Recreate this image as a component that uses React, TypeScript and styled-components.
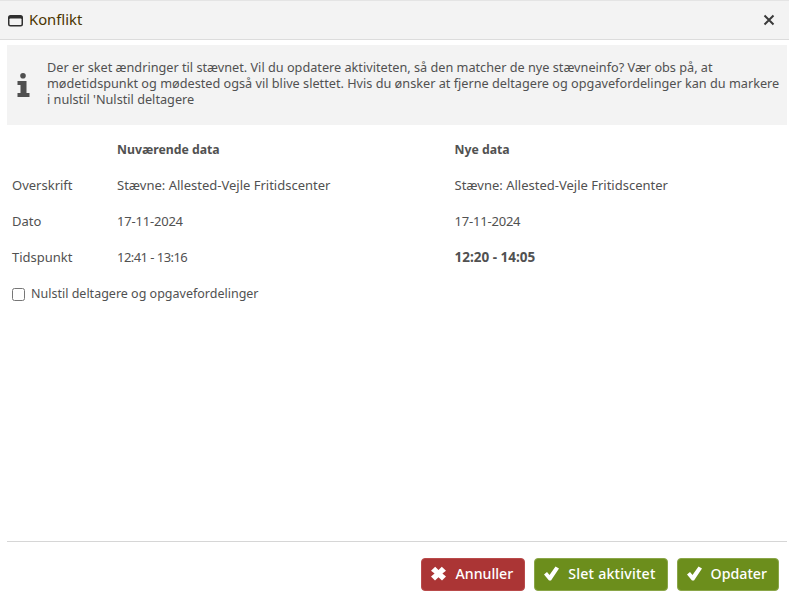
import React from "react";
import styled, { createGlobalStyle } from "styled-components";

const Global = createGlobalStyle`
  html, body { margin: 0; padding: 0; background: #fff; overflow: hidden; }
  * { box-sizing: border-box; }
`;
const Dialog = styled.div`
  width: 789px; height: 592px; display: flex; flex-direction: column;
  font-family: "Noto Sans", "Open Sans", sans-serif; font-size: 13px; color: #515151; overflow: hidden;
`;
const TitleBar = styled.header`
  height: 40px; flex: none; display: flex; align-items: center; padding: 0 14px 0 8px; gap: 6px;
  background: #f3f3f3; border-top: 1px solid #e4e4e4; border-bottom: 1px solid #dcdcdc;
`;
const Title = styled.span`
  flex: 1; font-size: 14.8px; color: #4a3500; margin-top: -3px;
`;
const Body = styled.main`
  flex: 1; display: flex; flex-direction: column; padding: 5px 2px 0 7px;
`;
const InfoBox = styled.section`
  height: 80px; display: flex; align-items: center; gap: 17px; padding: 0 4px 4px 10px; background: #f3f3f3;
  line-height: 16px; font-size: 12.7px;
`;
const InfoGlyph = styled.svg`
  flex: none; margin-top: 4px;
`;
const Grid = styled.div`
  display: grid; grid-template-columns: 105px 337.5px 1fr; grid-auto-rows: 36px; align-items: center;
  padding: 6px 0 0 5px;
`;
const Head = styled.div`
  font-weight: 700; font-size: 12.25px;
`;
const Cell = styled.div<{ $bold?: boolean; $track?: number }>`
  font-weight: ${(p) => (p.$bold ? 700 : 400)};
  font-size: ${(p) => (p.$bold ? "13.5px" : "13px")};
  letter-spacing: ${(p) => p.$track ?? 0}px;
`;
const CheckRow = styled.label`
  display: flex; align-items: center; gap: 6px; padding-left: 5px; height: 20px; margin-top: 8px;
  font-size: 12.5px;
`;
const Check = styled.input`
  width: 13px; height: 13px; margin: 3px 0 0 0;
`;
const Footer = styled.footer`
  flex: none; height: 51px; margin: 0 2px 0 7px; border-top: 1px solid #d6d6d6;
  display: flex; justify-content: flex-end; align-items: flex-start; gap: 9px; padding: 16px 8px 0 0;
`;
const Button = styled.button<{ $danger?: boolean; $spread?: boolean }>`
  height: 33px; display: flex; align-items: center; gap: 9px; padding: 0 11px 2px 9px; border-radius: 4px;
  font-family: inherit; font-size: 14.2px; font-weight: 500; color: #fff;
  letter-spacing: ${(p) => (p.$spread ? "0.2px" : "0")};
  background: ${(p) => (p.$danger ? "#ab3535" : "#6c8e1c")};
  border: 1px solid ${(p) => (p.$danger ? "#b94a4a" : "#8aa648")};
`;

const CheckIcon = () => (
  <svg width="15" height="15" viewBox="0 0 15 15" aria-hidden>
    <path d="M0 8.5 L3 6 L5.5 9 L11.5 0.5 L15 2.5 L7 14.5 L5 14.5 Z" fill="#fff" />
  </svg>
);
const CrossIcon = () => (
  <svg width="15" height="15" viewBox="0 0 15 15" aria-hidden>
    <path d="M7.5 4 L10.8 0.8 L15 4.8 L11.4 7.5 L15 10.4 L11 14.4 L7.5 11.2 L4 14.4 L0 10.4 L3.6 7.5 L0 4.8 L4.2 0.8 Z" fill="#fff" />
  </svg>
);
const WindowIcon = () => (
  <svg width="15" height="13" viewBox="0 0 15 13" aria-hidden>
    <rect x="0" y="1" width="15" height="11.5" rx="2.5" fill="#2f2f2f" />
    <rect x="1.5" y="4.5" width="12" height="6.5" rx="0.8" fill="#f3f3f3" />
  </svg>
);
const CloseIcon = () => (
  <svg width="12" height="12" viewBox="0 0 12 12" aria-hidden>
    <path d="M1.5 1.5 L10.5 10.5 M10.5 1.5 L1.5 10.5" stroke="#3a3a3a" strokeWidth="2" />
  </svg>
);
const InfoIcon = () => (
  <InfoGlyph width="13" height="24" viewBox="0 0 13 24" aria-hidden>
    <circle cx="6" cy="2.8" r="2.8" fill="#4f4f4f" />
    <path d="M0.5 8 H9.5 V20 H12.5 V24 H0.5 V20 H3.5 V12 H0.5 Z" fill="#4f4f4f" />
  </InfoGlyph>
);

export default function App() {
  return (
    <Dialog>
      <Global />
      <TitleBar>
        <WindowIcon />
        <Title>Konflikt</Title>
        <CloseIcon />
      </TitleBar>
      <Body>
        <InfoBox>
          <InfoIcon />
          <div>
            Der er sket ændringer til stævnet. Vil du opdatere aktiviteten, så den matcher de nye stævneinfo? Vær obs på, at
            mødetidspunkt og mødested også vil blive slettet. Hvis du ønsker at fjerne deltagere og opgavefordelinger kan du markere
            i nulstil 'Nulstil deltagere
          </div>
        </InfoBox>
        <Grid>
          <Cell />
          <Head>Nuværende data</Head>
          <Head>Nye data</Head>
          <Cell>Overskrift</Cell>
          <Cell>Stævne: Allested-Vejle Fritidscenter</Cell>
          <Cell>Stævne: Allested-Vejle Fritidscenter</Cell>
          <Cell>Dato</Cell>
          <Cell $track={-0.2}>17-11-2024</Cell>
          <Cell $track={-0.2}>17-11-2024</Cell>
          <Cell>Tidspunkt</Cell>
          <Cell $track={-0.55}>12:41 - 13:16</Cell>
          <Cell $bold>12:20 - 14:05</Cell>
        </Grid>
        <CheckRow>
          <Check type="checkbox" />
          Nulstil deltagere og opgavefordelinger
        </CheckRow>
      </Body>
      <Footer>
        <Button $danger><CrossIcon />Annuller</Button>
        <Button $spread><CheckIcon />Slet aktivitet</Button>
        <Button><CheckIcon />Opdater</Button>
      </Footer>
    </Dialog>
  );
}
